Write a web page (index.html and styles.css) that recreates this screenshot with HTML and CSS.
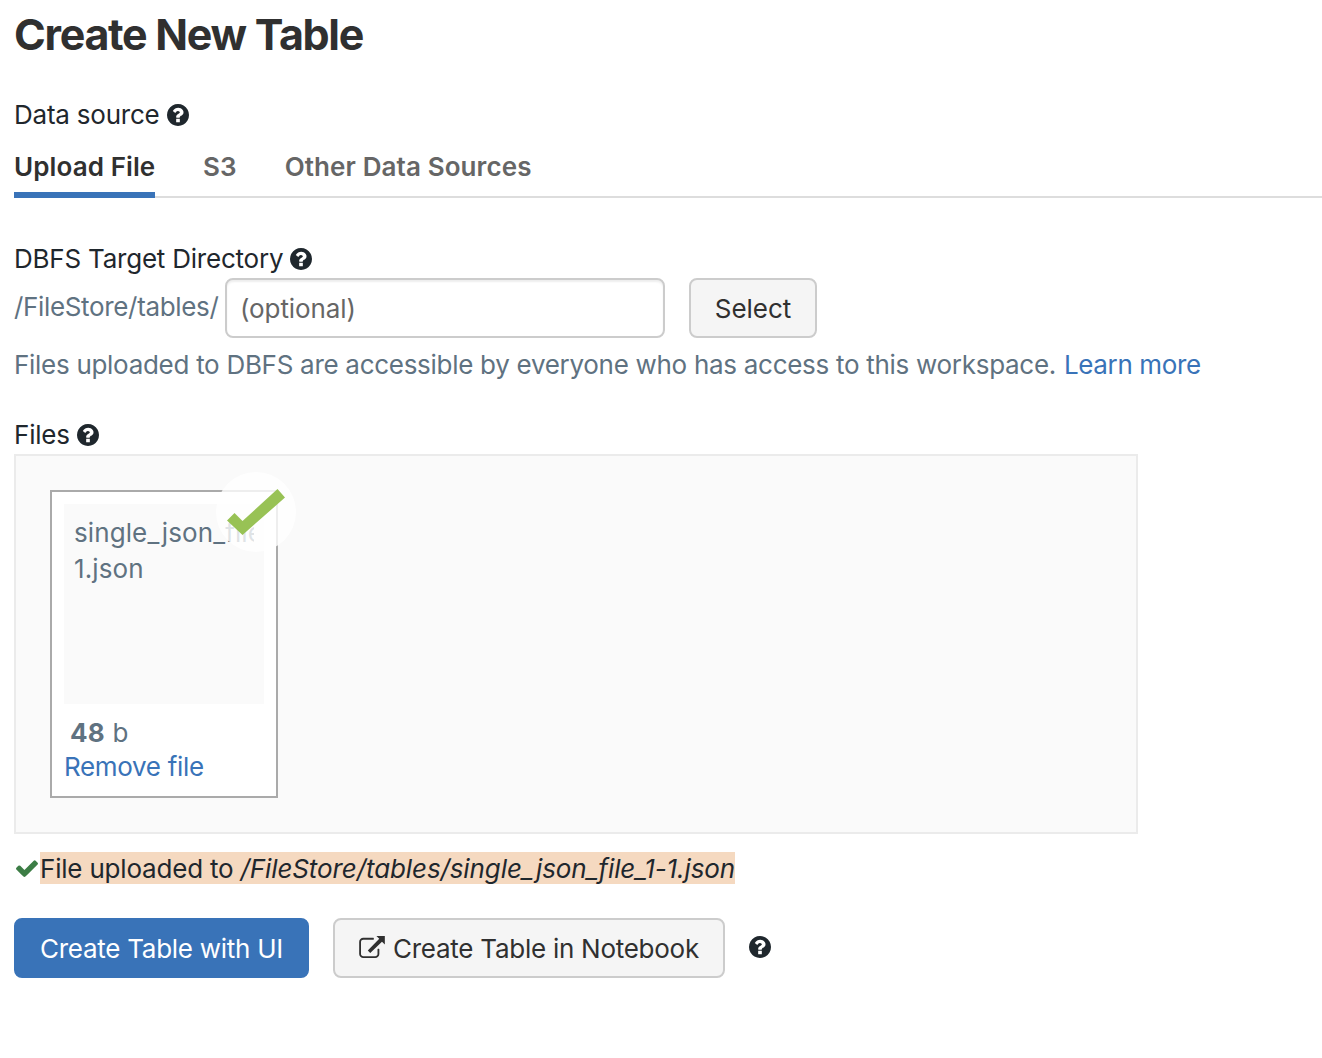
FILE: index.html
```html
<!DOCTYPE html>
<html lang="en">
<head>
<meta charset="utf-8">
<title>Create New Table</title>
<link rel="stylesheet" href="styles.css">
</head>
<body>
<svg class="defs" width="0" height="0">
  <symbol id="help" viewBox="128 128 1536 1536"><path fill="#1f272d" d="M1024 1376v-192q0-14-9-23t-23-9h-192q-14 0-23 9t-9 23v192q0 14 9 23t23 9h192q14 0 23-9t9-23zm256-672q0-88-55.500-163t-138.500-116-170-41q-243 0-371 213-15 24 8 42l132 100q7 6 19 6 16 0 25-12 53-68 86-92 34-24 86-24 48 0 85.500 26t37.500 59q0 38-20 61t-68 45q-63 28-115.500 86.500t-52.500 125.500v36q0 14 9 23t23 9h192q14 0 23-9t9-23q0-19 21.500-49.500t54.500-49.500q32-18 49-28.500t46-35 44.500-48 28-60.500 12.500-81zm384 192q0 209-103 385.500t-279.500 279.500-385.500 103-385.500-103-279.500-279.500-103-385.500 103-385.500 279.500-279.500 385.500-103 385.500 103 279.500 279.500 103 385.500z"/></symbol>
</svg>
<main class="page">
  <h1 class="title">Create New Table</h1>
  <div class="label source"><span>Data source</span><svg class="help"><use href="#help"/></svg></div>
  <nav class="tabs">
    <a class="tab active">Upload File</a>
    <a class="tab">S3</a>
    <a class="tab">Other Data Sources</a>
  </nav>
  <div class="label directory"><span>DBFS Target Directory</span><svg class="help"><use href="#help"/></svg></div>
  <div class="path-row">
    <span class="prefix">/FileStore/tables/</span>
    <div class="input">(optional)</div>
    <button class="btn select">Select</button>
  </div>
  <p class="hint"><span>Files uploaded to DBFS are accessible by everyone who has access to this workspace.</span><a class="link">Learn more</a></p>
  <div class="label files"><span>Files</span><svg class="help"><use href="#help"/></svg></div>
  <section class="dropzone">
    <div class="card">
      <div class="preview"><div class="name">single_json_file_<br>1.json</div></div>
      <div class="size"><b>48</b> b</div>
      <a class="link remove">Remove file</a>
      <div class="badge"><svg width="80" height="80" viewBox="0 0 80 80"><path d="M11 48.500l7.500-7.500 8 8L61.500 17l7.500 8.500L26.500 63z" fill="#98c255"/></svg></div>
    </div>
  </section>
  <div class="status">
    <svg class="check" viewBox="121 310 1550 1212" preserveAspectRatio="none"><path fill="#3c7d45" d="M1671 566q0 40-28 68l-724 724-136 136q-28 28-68 28t-68-28l-136-136-362-362q-28-28-28-68t28-68l136-136q28-28 68-28t68 28l294 295 656-657q28-28 68-28t68 28l136 136q28 28 28 68z"/></svg>
    <span class="mark">File uploaded to <i>/FileStore/tables/single_json_file_1-1.json</i></span>
  </div>
  <div class="actions">
    <button class="btn primary">Create Table with UI</button>
    <button class="btn notebook"><svg class="external" viewBox="0 0 1792 1536"><path fill="#303030" d="M1408 928v320q0 119-84.500 203.500t-203.500 84.500h-832q-119 0-203.500-84.500t-84.500-203.500v-832q0-119 84.500-203.500t203.500-84.500h704q14 0 23 9t9 23v64q0 14-9 23t-23 9h-704q-66 0-113 47t-47 113v832q0 66 47 113t113 47h832q66 0 113-47t47-113v-320q0-14 9-23t23-9h64q14 0 23 9t9 23z"/><path fill="#303030" d="M1792 0v600l-200-200-820 780-170-170 800-810-200-200z"/></svg><span>Create Table in Notebook</span></button>
    <svg class="help last"><use href="#help"/></svg>
  </div>
</main>
</body>
</html>
```
FILE: styles.css
```css
* { box-sizing: border-box; }
body { margin: 0; background: #fff; color: #1f272d; font: 26px/36px Inter, sans-serif; overflow: hidden; }
.defs { position: absolute; }
.page { padding: 7px 0 0 14px; display: flex; flex-direction: column; align-items: flex-start; white-space: nowrap; }
.title { margin: 0; font-size: 43px; line-height: 54px; font-weight: 650; color: #303030; letter-spacing: -1.3px; }
.label { display: flex; align-items: center; gap: 7px; height: 36px; letter-spacing: -.22px; }
.help { width: 22px; height: 22px; flex: none; }
.source { margin-top: 36px; }
.tabs { display: flex; gap: 48px; width: 100%; height: 49px; margin-top: 16px; border-bottom: 2px solid #ddd; font-weight: 600; letter-spacing: .1px; }
.tab { height: 49px; color: #666; }
.tab.active { width: 141px; color: #303030; border-bottom: 6px solid #3973b8; }
.directory { margin-top: 43px; }
.path-row { display: flex; height: 60px; margin-top: 1px; }
.prefix { width: 211px; padding-top: 11px; color: #5f7281; letter-spacing: -.34px; }
.input { width: 440px; border: 2px solid #ccc; border-radius: 8px; padding: 11px 13px; color: #666; letter-spacing: -.1px; box-shadow: inset 0 2px 2px #eee; }
.btn { height: 60px; border: 2px solid #ccc; border-radius: 8px; background: #f5f5f5; color: #303030; font: inherit; letter-spacing: -.26px; padding: 2px 0 0; display: flex; align-items: center; justify-content: center; }
.select { width: 128px; margin-left: 24px; letter-spacing: -.05px; }
.hint { display: flex; gap: 8px; margin: 9px 0 0; color: #5f7281; letter-spacing: -.29px; }
.link { color: #3973b8; letter-spacing: -.37px; }
.files { margin-top: 34px; }
.dropzone { width: 1124px; height: 380px; margin-top: 1px; padding: 34px; border: 2px solid #ebebeb; background: #fafafa; }
.card { position: relative; width: 228px; height: 308px; border: 2px solid #aaa; padding: 12px; background: #fff; color: #5f7281; }
.preview { width: 200px; height: 200px; background: #fafafa; padding: 11px 10px; }
.name { overflow: hidden; width: 180px; letter-spacing: .1px; }
.size { margin: 11px 0 0 6px; letter-spacing: .2px; }
.remove { display: block; margin-top: -2px; letter-spacing: -.32px; }
.badge { position: absolute; left: 164px; top: -20px; width: 80px; height: 80px; border-radius: 50%; background: rgba(255,255,255,.8); }
.status { display: flex; align-items: center; margin-top: 18px; height: 32px; }
.check { width: 22px; height: 17px; margin: 1px 2px 0; }
.mark { height: 32px; padding-top: 1px; background: #f5d9c0; line-height: 32px; letter-spacing: -.2px; }
.mark i { letter-spacing: -.1px; }
.actions { display: flex; margin-top: 34px; }
.primary { width: 295px; background: #3973b8; border-color: #3973b8; color: #fff; }
.notebook { width: 392px; margin-left: 24px; gap: 8px; }
.external { width: 26px; height: 22px; margin-top: -4px; }
.last { margin: 18px 0 0 24px; }
```
